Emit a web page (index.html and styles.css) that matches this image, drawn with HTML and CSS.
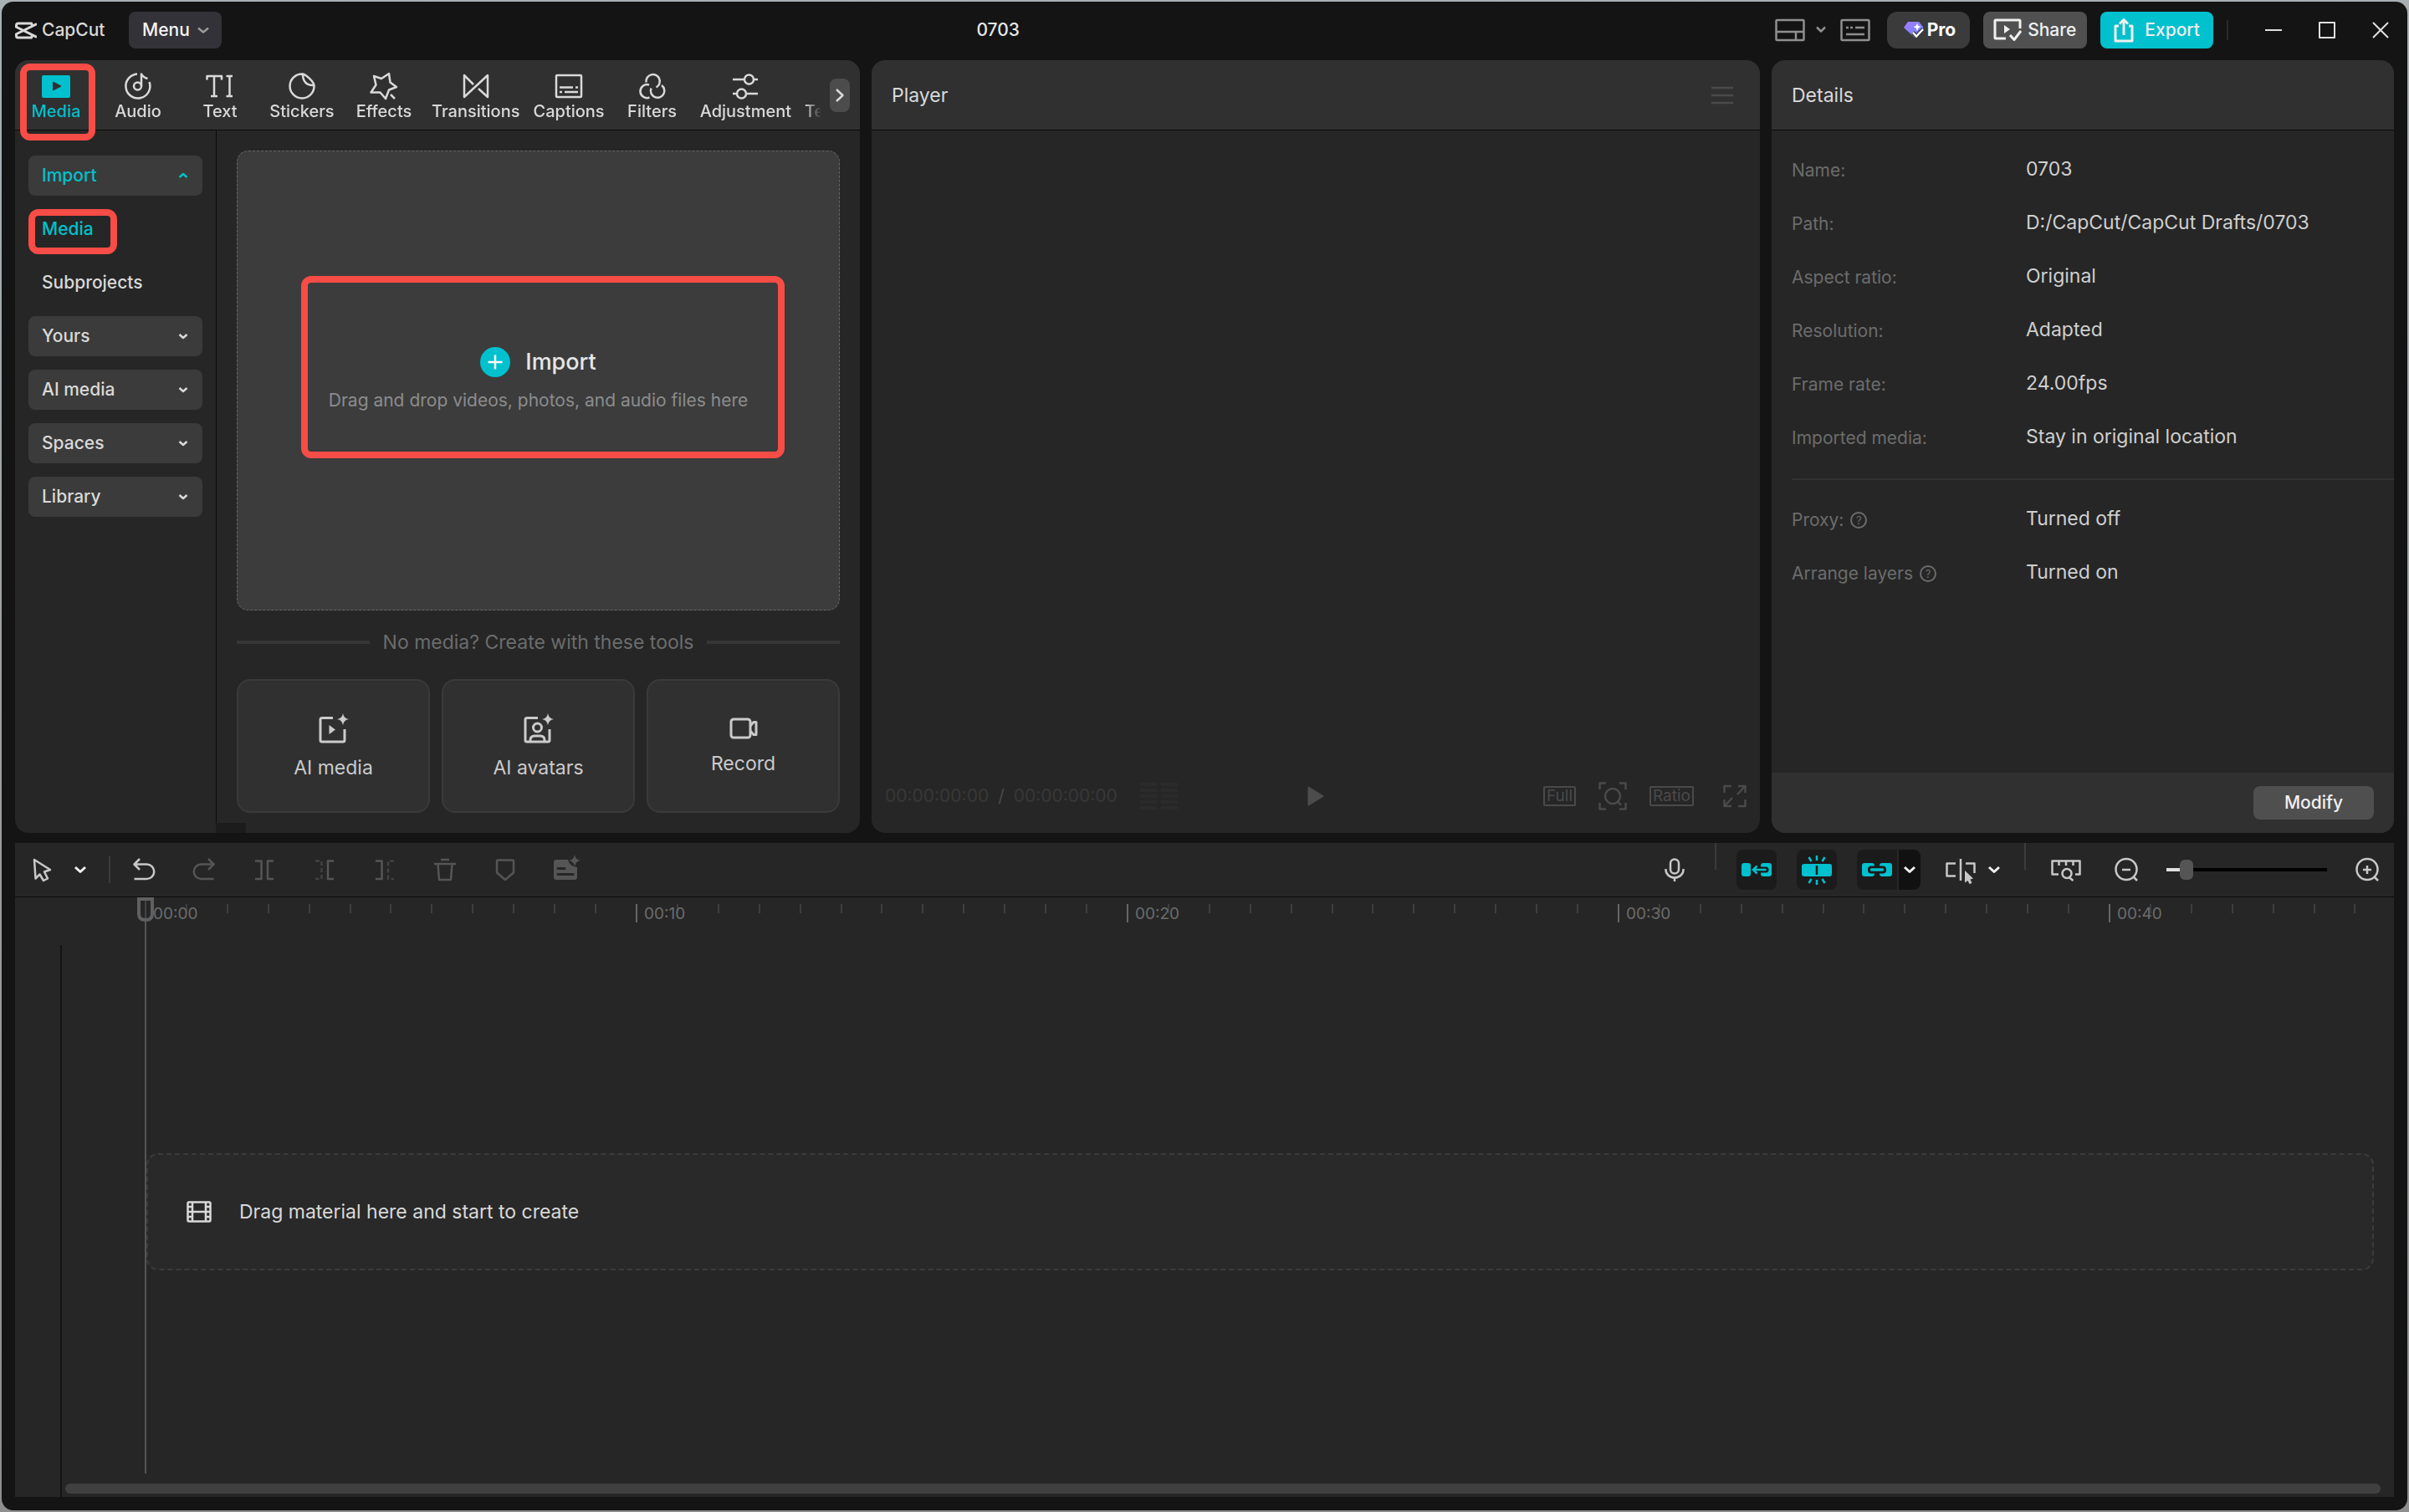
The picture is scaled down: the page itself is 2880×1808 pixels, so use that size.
FILE: index.html
```html
<!DOCTYPE html>
<html lang="en">

<head>
    <meta charset="utf-8" />
    <meta name="viewport" content="width=device-width, initial-scale=1">
    <title>CapCut - 0703</title>
    <link rel="stylesheet" href="styles.css">
</head>

<body>
    <div class="window">
        <header class="titlebar">
            <div class="brand">
                <svg class="logo" width="26" height="21" viewBox="0 0 26 21">
                    <path d="M1.500 7V4a2 2 0 0 1 2-2H19.500L21 5M1.500 14V17a2 2 0 0 0 2 2H19.500L21 16M1 6L26 18.500M1 15L26 2.500" />
                </svg>
                <span>CapCut</span>
            </div>
            <button class="menu-btn">Menu
                <svg class="icon" width="16" height="10" viewBox="0 0 16 10"><path d="M2 2.500L8 7.500L14 2.500" /></svg>
            </button>
            <h1>0703</h1>
            <div class="title-actions">
                <button class="plain layout-btn" aria-label="Layout">
                    <svg class="icon" width="36" height="28" viewBox="0 0 36 28"><rect x="1.500" y="2" width="33" height="24" rx="1" /><path d="M1 16H35M25 16V26" /></svg>
                    <svg class="icon" width="14" height="14" viewBox="0 0 14 14"><path d="M2 3.500L7 8.500L12 3.500" /></svg>
                </button>
                <button class="plain" aria-label="Shortcuts">
                    <svg class="icon" width="36" height="28" viewBox="0 0 36 28"><rect x="1.500" y="2" width="33" height="24" rx="1" /><path d="M7 11h3M12 11h3M18 11H29M7 19H29" /></svg>
                </button>
                <button class="btn pro">
                    <svg width="24" height="20" viewBox="0 0 24 20">
                        <defs><linearGradient id="gem" x1="0" y1="0" x2="1" y2="1"><stop offset="0" stop-color="#a57cff" /><stop offset="1" stop-color="#6a86ff" /></linearGradient></defs>
                        <path d="M5 0H18L23 6V9L13 19L0 7Z" fill="url(#gem)" />
                        <path d="M16 2l1.500 3 3 1-3 1.500L16 11l-1.500-3.500-3-1.500 3-1Z" fill="#fff" />
                        <path d="M11 13L15 17.500L23 9" fill="none" stroke="#3a3a3a" stroke-width="5" />
                        <path d="M11 13L15 17.500L23 9" fill="none" stroke="#fff" stroke-width="2.500" />
                    </svg>
                    Pro
                </button>
                <button class="btn share">
                    <svg class="icon" width="34" height="28" viewBox="0 0 34 28"><path d="M32 12V3a1 1 0 0 0-1-1H3a1 1 0 0 0-1 1V23a1 1 0 0 0 1 1H15M20 20L25 25.500L33 15" /><path class="fill" d="M13 8L20 13L13 18Z" /></svg>
                    Share
                </button>
                <button class="btn export">
                    <svg class="icon" width="24" height="30" viewBox="0 0 24 30"><path d="M6 10H2V28H22V10H18M12 21V2.500M7 7.500L12 2.500L17 7.500" /></svg>
                    Export
                </button>
                <span class="divider"></span>
                <button class="plain win" aria-label="Minimize"><svg class="icon" width="20" height="20" viewBox="0 0 20 20"><path d="M0 10H20" /></svg></button>
                <button class="plain win" aria-label="Maximize"><svg class="icon" width="20" height="20" viewBox="0 0 20 20"><rect x="1" y="1" width="18" height="18" /></svg></button>
                <button class="plain win" aria-label="Close"><svg class="icon" width="20" height="20" viewBox="0 0 20 20"><path d="M1 1L19 19M19 1L1 19" /></svg></button>
            </div>
        </header>

        <main class="workspace">
            <section class="panel library">
                <div class="panel-head tabs-head">
                    <nav class="tabs">
                        <button class="tab active">
                            <svg width="36" height="36" viewBox="0 0 36 36"><rect x="1" y="5" width="34" height="27" rx="2" fill="#00c1cd" /><path d="M14.500 13L24 18L14.500 23Z" fill="#303030" stroke="#303030" stroke-linejoin="round" /></svg>
                            Media
                        </button>
                        <button class="tab">
                            <svg class="icon" width="36" height="36" viewBox="0 0 36 36"><path d="M17 3.500A14.500 14.500 0 1 0 31.500 13M22 18V3.500Q24 7.500 29.500 9" /><circle cx="17.500" cy="18" r="4.500" /></svg>
                            Audio
                        </button>
                        <button class="tab">
                            <svg class="icon" width="36" height="36" viewBox="0 0 36 36"><path d="M2.500 10.500V6H20V10.500M11 6V30M7 30H15M25.500 6H33M29.500 6V30M25.500 30H33" /></svg>
                            Text
                        </button>
                        <button class="tab">
                            <svg class="icon" width="36" height="36" viewBox="0 0 36 36"><path d="M19 3.500A14.500 14.500 0 1 0 32.500 17C32 13 23 4 19 3.500C19 12 23 17.500 32.500 17" /></svg>
                            Stickers
                        </button>
                        <button class="tab">
                            <svg class="icon" width="36" height="36" viewBox="0 0 36 36"><path d="M6 6L15 9L24 3L25.500 13.500L33 19L24 22.500L20 33L13.500 25.500L2.500 25.500L8.500 16.500ZM26 28L31 33" /></svg>
                            Effects
                        </button>
                        <button class="tab">
                            <svg class="icon" width="36" height="36" viewBox="0 0 36 36"><path d="M15 16L4 5V31L32 5V31L21 21" /></svg>
                            Transitions
                        </button>
                        <button class="tab">
                            <svg class="icon" width="36" height="36" viewBox="0 0 36 36"><rect x="3" y="5" width="30" height="26" rx="1" /><path d="M7 19.500H23M26 19.500h3M7 25h3M13 25H29" /></svg>
                            Captions
                        </button>
                        <button class="tab">
                            <svg class="icon" width="36" height="36" viewBox="0 0 36 36"><path d="M10.500 13.500A8.200 8.200 0 1 1 22.500 19.500M14 16.500A8 8 0 1 0 14.500 31.500M16.500 20.500A8.200 8.200 0 1 0 29 17" /></svg>
                            Filters
                        </button>
                        <button class="tab">
                            <svg class="icon" width="36" height="36" viewBox="0 0 36 36"><path d="M3 10H17M28 10H33M3 27H8M19 27H33" /><circle cx="22.500" cy="10" r="5.500" /><circle cx="13.500" cy="27" r="5.500" /></svg>
                            Adjustment
                        </button>
                        <button class="tab">
                            <svg class="icon" width="36" height="36" viewBox="0 0 36 36"></svg>
                            Templates
                        </button>
                    </nav>
                    <button class="tabs-next" aria-label="More tabs">
                        <svg class="icon" width="12" height="18" viewBox="0 0 12 18"><path d="M2 2L9.500 9L2 16" /></svg>
                    </button>
                </div>
                <div class="library-body">
                    <nav class="side">
                        <button class="group active">Import <svg class="icon" width="14" height="10" viewBox="0 0 14 10"><path d="M2.500 7L7 3L11.500 7" /></svg></button>
                        <a class="side-link active" href="#media">Media</a>
                        <a class="side-link" href="#subprojects">Subprojects</a>
                        <button class="group">Yours <svg class="icon" width="14" height="10" viewBox="0 0 14 10"><path d="M2.500 3L7 7L11.500 3" /></svg></button>
                        <button class="group">AI media <svg class="icon" width="14" height="10" viewBox="0 0 14 10"><path d="M2.500 3L7 7L11.500 3" /></svg></button>
                        <button class="group">Spaces <svg class="icon" width="14" height="10" viewBox="0 0 14 10"><path d="M2.500 3L7 7L11.500 3" /></svg></button>
                        <button class="group">Library <svg class="icon" width="14" height="10" viewBox="0 0 14 10"><path d="M2.500 3L7 7L11.500 3" /></svg></button>
                    </nav>
                    <div class="media">
                        <div class="dropzone">
                            <button class="plain import-btn">
                                <svg width="36" height="36" viewBox="0 0 36 36"><circle cx="18" cy="18" r="18" fill="#00c1cd" /><path d="M9.500 18H26.500M18 9.500V26.500" stroke="#fff" stroke-width="2.500" /></svg>
                                Import
                            </button>
                            <p>Drag and drop videos, photos, and audio files here</p>
                            <span class="mark mark-drop"></span>
                        </div>
                        <p class="or">No media? Create with these tools</p>
                        <div class="cards">
                            <button class="card">
                                <svg class="icon" width="36" height="36" viewBox="0 0 36 36"><path d="M17 5.500H4a2 2 0 0 0-2 2V32a2 2 0 0 0 2 2H29a2 2 0 0 0 2-2V19" /><path class="fill" d="M12.500 14L20 19.500L12.500 25Z" /><path class="fill" d="M29 0Q30 6 36 7Q30 8 29 14Q28 8 22 7Q28 6 29 0Z" /></svg>
                                AI media
                            </button>
                            <button class="card">
                                <svg class="icon" width="36" height="36" viewBox="0 0 36 36"><path d="M17 5.500H4a2 2 0 0 0-2 2V32a2 2 0 0 0 2 2H29a2 2 0 0 0 2-2V19M8 33V32Q8 27 13 27H20Q25 27 25 32V33" /><circle cx="16.500" cy="17" r="5" /><path class="fill" d="M29 0Q30 6 36 7Q30 8 29 14Q28 8 22 7Q28 6 29 0Z" /></svg>
                                AI avatars
                            </button>
                            <button class="card">
                                <svg class="icon" width="34" height="26" viewBox="0 0 34 26"><rect x="2" y="2" width="23" height="22" rx="3" /><path d="M25 10L29 5.500H32V20.500H29L25 16" /></svg>
                                Record
                            </button>
                        </div>
                    </div>
                </div>
                <span class="mark mark-tab"></span>
                <span class="mark mark-link"></span>
            </section>

            <section class="panel player">
                <div class="panel-head">
                    <h2>Player</h2>
                    <button class="plain dim" aria-label="Player menu"><svg class="icon" width="26" height="22" viewBox="0 0 26 22"><path d="M0 2H26M0 11H26M0 20H26" /></svg></button>
                </div>
                <div class="screen"></div>
                <div class="player-bar">
                    <div class="timecode">
                        <span>00:00:00:00</span><span class="slash">/</span><span>00:00:00:00</span>
                        <svg width="45" height="34" viewBox="0 0 45 34"><path d="M0 3H20M25 3H45M0 10H20M25 10H45M0 17H20M25 17H45M0 24H20M25 24H45M0 31H20M25 31H45" stroke="#2b2b2b" stroke-width="4" /></svg>
                    </div>
                    <button class="plain" aria-label="Play"><svg width="20" height="24" viewBox="0 0 20 24"><path d="M1.500 1.500L18.500 12L1.500 22.500Z" fill="#4c4c4c" stroke="#4c4c4c" stroke-width="2" stroke-linejoin="round" /></svg></button>
                    <div class="view-tools">
                        <button class="boxed">Full</button>
                        <button class="plain" aria-label="Zoom to fit"><svg class="icon" width="34" height="34" viewBox="0 0 34 34"><path d="M1.500 9V1.500H9M25 1.500H32.500V9M1.500 25V32.500H9M25 32.500H32.500V25M22 23L27 27.500" /><circle cx="17" cy="17" r="9" /></svg></button>
                        <button class="boxed">Ratio</button>
                        <button class="plain" aria-label="Full screen"><svg class="icon" width="28" height="28" viewBox="0 0 28 28"><path d="M1.500 10V2H10M18 2H26.500V10M26 2.500L17 12M1.500 18V26H10M2 25.500L11 16M26.500 18V26H18" /></svg></button>
                    </div>
                </div>
            </section>

            <section class="panel details">
                <div class="panel-head">
                    <h2>Details</h2>
                </div>
                <dl class="props">
                    <div><dt>Name:</dt><dd>0703</dd></div>
                    <div><dt>Path:</dt><dd>D:/CapCut/CapCut Drafts/0703</dd></div>
                    <div><dt>Aspect ratio:</dt><dd>Original</dd></div>
                    <div><dt>Resolution:</dt><dd>Adapted</dd></div>
                    <div><dt>Frame rate:</dt><dd>24.00fps</dd></div>
                    <div><dt>Imported media:</dt><dd>Stay in original location</dd></div>
                </dl>
                <dl class="props more">
                    <div><dt>Proxy: <span class="help">?</span></dt><dd>Turned off</dd></div>
                    <div><dt>Arrange layers <span class="help">?</span></dt><dd>Turned on</dd></div>
                </dl>
                <div class="details-foot">
                    <button class="btn modify">Modify</button>
                </div>
            </section>
        </main>

        <section class="timeline">
            <div class="toolbar">
                <div class="tools">
                    <div class="split">
                        <button class="tool" aria-label="Select"><svg class="icon" width="48" height="48" viewBox="0 0 48 48"><path d="M15 12L34 24L27 26.500L31 34.500L26 37L21.500 29.500L16.500 34.500Z" /></svg></button>
                        <button class="tool narrow bright" aria-label="Select options"><svg class="icon" width="18" height="12" viewBox="0 0 18 12"><path d="M3 3L9 8.500L15 3" /></svg></button>
                    </div>
                    <span class="sep"></span>
                    <button class="tool" aria-label="Undo"><svg class="icon" width="48" height="48" viewBox="0 0 48 48"><path d="M19 11L12.500 17.500L19 24M13 17.500H27.500A8.500 8.500 0 0 1 27.500 35H12.500" /></svg></button>
                    <button class="tool off" aria-label="Redo"><svg class="icon" width="48" height="48" viewBox="0 0 48 48"><path d="M29 11L35.500 17.500L29 24M35 17.500H20.500A8.500 8.500 0 0 0 20.500 35H35.500" /></svg></button>
                    <button class="tool off" aria-label="Split"><svg class="icon" width="48" height="48" viewBox="0 0 48 48"><path d="M13 13.500H20.500V35H13M35 13.500H28V35H35" /></svg></button>
                    <button class="tool off" aria-label="Delete left"><svg class="icon" width="48" height="48" viewBox="0 0 48 48"><path d="M13 13.500H20.500V35H13" stroke-dasharray="5 3" opacity=".6" /><path d="M35 13.500H28V35H35" /></svg></button>
                    <button class="tool off" aria-label="Delete right"><svg class="icon" width="48" height="48" viewBox="0 0 48 48"><path d="M35 13.500H28V35H35" stroke-dasharray="5 3" opacity=".6" /><path d="M13 13.500H20.500V35H13" /></svg></button>
                    <button class="tool off" aria-label="Delete"><svg class="icon" width="48" height="48" viewBox="0 0 48 48"><path d="M11 17H37M19 12H29M15.500 17L17 36H31L32.500 17" /></svg></button>
                    <button class="tool off" aria-label="Marker"><svg class="icon" width="48" height="48" viewBox="0 0 48 48"><path d="M15.500 12.500H32.500a1.500 1.500 0 0 1 1.500 1.500V27.500L24 36L14 27.500V14a1.500 1.500 0 0 1 1.500-1.500Z" /></svg></button>
                    <button class="tool off" aria-label="Auto notes"><svg width="48" height="48" viewBox="0 0 48 48"><path d="M13 12H27Q29 20 38 21V33a3 3 0 0 1-3 3H13a3 3 0 0 1-3-3V15a3 3 0 0 1 3-3Z" fill="currentColor" /><path d="M15 22.500H23M15 29.500H33" stroke="#262626" stroke-width="3" stroke-linecap="round" /><path d="M35 6Q36 12 42 13Q36 14 35 20Q34 14 28 13Q34 12 35 6Z" fill="currentColor" /></svg></button>
                </div>
                <div class="tools">
                    <button class="tool" aria-label="Record voiceover"><svg class="icon" width="48" height="48" viewBox="0 0 48 48"><rect x="19" y="11.500" width="10" height="17" rx="5" /><path d="M13.500 23V24A10.500 9.500 0 0 0 34.500 24V23M24 33.500V38" /></svg></button>
                    <span class="sep high"></span>
                    <button class="tool on" aria-label="Main track magnet"><svg width="48" height="48" viewBox="0 0 48 48"><rect x="6" y="16" width="11" height="16" rx="3" fill="#00c1cd" /><rect x="29" y="16" width="13" height="16" rx="3" fill="#00c1cd" /><path d="M29 24H35" stroke="#1b1b1b" stroke-width="7" stroke-linecap="round" /><path d="M19 24H35.500M24.500 19.500L20 24L24.500 28.500" fill="none" stroke="#00c1cd" stroke-width="2.500" /></svg></button>
                    <button class="tool on" aria-label="Auto snapping"><svg width="48" height="48" viewBox="0 0 48 48"><rect x="6" y="17" width="36" height="15" rx="3" fill="#00c1cd" /><path d="M24 19V30" stroke="#1b1b1b" stroke-width="2.500" /><path d="M24 7V13M14.500 9L17.500 14M33.500 9L30.500 14M24 36V42M14.500 40L17.500 35M33.500 40L30.500 35" stroke="#00c1cd" stroke-width="2.500" /></svg></button>
                    <div class="split joined">
                        <button class="tool on" aria-label="Linkage"><svg width="48" height="48" viewBox="0 0 48 48"><rect x="6" y="16" width="15" height="16" rx="3" fill="#00c1cd" /><rect x="27" y="16" width="15" height="16" rx="3" fill="#00c1cd" /><rect x="13" y="19.500" width="22" height="9" rx="4" fill="#1b1b1b" /><path d="M17.500 24H30.500" stroke="#00c1cd" stroke-width="3.500" stroke-linecap="round" /></svg></button>
                        <button class="tool narrow bright" aria-label="Linkage options"><svg class="icon" width="18" height="12" viewBox="0 0 18 12"><path d="M3 3L9 8.500L15 3" /></svg></button>
                    </div>
                    <div class="split tight">
                        <button class="tool" aria-label="Preview axis"><svg class="icon" width="48" height="48" viewBox="0 0 48 48"><path d="M18 16.500H7.500V31.500H18M24 11V37M30 16.500H40.500V28" /><path class="fill" d="M29 25L39 34.500L35.500 35.500L37.500 40L34.500 41L32.500 37L29 39.500Z" /></svg></button>
                        <button class="tool narrow bright" aria-label="Preview axis options"><svg class="icon" width="18" height="12" viewBox="0 0 18 12"><path d="M3 3L9 8.500L15 3" /></svg></button>
                    </div>
                    <span class="sep high"></span>
                    <button class="tool" aria-label="Zoom to fit timeline"><svg class="icon" width="48" height="48" viewBox="0 0 48 48"><path d="M15 29.500H7.500V13.500H40.500V29.500H35M15.500 14V19M24 14V19M32.500 14V19M28 33.500L32.500 37" /><circle cx="25" cy="28.500" r="5.500" /></svg></button>
                    <button class="tool" aria-label="Zoom out"><svg class="icon" width="48" height="48" viewBox="0 0 48 48"><circle cx="24" cy="23.500" r="12.500" /><path d="M19 24H29M32.500 32.500L37 37" /></svg></button>
                    <input class="zoom" type="range" min="0" max="100" value="9" aria-label="Timeline zoom">
                    <button class="tool" aria-label="Zoom in"><svg class="icon" width="48" height="48" viewBox="0 0 48 48"><circle cx="24" cy="23.500" r="12.500" /><path d="M19 24H29M24 19V29M32.500 32.500L37 37" /></svg></button>
                </div>
            </div>
            <div class="timeline-body">
                <div class="ruler">
                    <span>00:00</span><span>00:10</span><span>00:20</span><span>00:30</span><span>00:40</span>
                </div>
                <div class="tracks">
                    <div class="track-heads"></div>
                    <div class="track-area">
                        <div class="track-list">
                            <div class="track-drop">
                                <svg class="icon" width="30" height="26" viewBox="0 0 30 26"><rect x="1.500" y="1.500" width="27" height="23" rx="1.500" /><path d="M7 2V24M23 2V24M7 13H23M2 7H7M2 13H7M2 19H7M23 7H28M23 13H28M23 19H28" /></svg>
                                Drag material here and start to create
                            </div>
                        </div>
                        <div class="scrollbar"></div>
                    </div>
                </div>
                <div class="playhead">
                    <svg width="20" height="29" viewBox="0 0 20 29"><path d="M2 2H18V20Q18 27 10 27Q2 27 2 20Z" fill="#262626" stroke="#606060" stroke-width="4" /><path d="M10 4V25" stroke="#606060" stroke-width="1" /></svg>
                </div>
            </div>
        </section>
    </div>
</body>

</html>
```
FILE: styles.css
```css
:root {
    --bg: #141414;
    --panel: #262626;
    --panel-head: #303030;
    --raised: #3b3b3b;
    --line: #0a0a0a;
    --text: #d9d9d9;
    --muted: #6c6c6c;
    --dim: #4a4a4a;
    --accent: #00c1cd;
    --mark: #f84c46;
}

* {
    box-sizing: border-box;
}

body {
    margin: 0;
    height: 100vh;
    padding: 2px;
    background: linear-gradient(#a9b0b4, #8e8e8e);
    color: var(--text);
    font-family: Inter, "Liberation Sans", sans-serif;
    font-size: 23px;
    line-height: 28px;
}

h1,
h2,
p,
dl,
dd {
    margin: 0;
    font-size: 23px;
    font-weight: 400;
}

button {
    border: 0;
    padding: 0;
    font: inherit;
    color: inherit;
    background: none;
    cursor: pointer;
}

svg {
    display: block;
    flex: none;
}

.icon {
    fill: none;
    stroke: currentColor;
    stroke-width: 2.5;
    stroke-linejoin: round;
}

.icon .fill {
    fill: currentColor;
    stroke: none;
}

.window {
    height: 100%;
    display: flex;
    flex-direction: column;
    padding: 0 16px 16px;
    border-radius: 14px;
    background: var(--bg);
}

/* title bar */
.titlebar {
    display: flex;
    align-items: center;
    height: 70px;
    padding-bottom: 2px;
    font-size: 21px;
    font-weight: 500;
}

.brand {
    display: flex;
    align-items: center;
    gap: 6px;
    width: 136px;
}

.logo {
    fill: none;
    stroke: #d9d9d9;
    stroke-width: 3;
}

.menu-btn {
    display: flex;
    align-items: center;
    gap: 8px;
    height: 44px;
    padding: 0 14px 0 16px;
    border-radius: 8px;
    background: #333238;
    color: #f5f5f5;
}

.menu-btn .icon {
    color: #9a9a9a;
}

.titlebar h1 {
    flex: 1;
    text-align: center;
    color: #e6e6e6;
    font-size: 21px;
    font-weight: 500;
}

.title-actions {
    display: flex;
    align-items: center;
    gap: 16px;
    color: #f0f0f0;
}

.title-actions > .plain {
    color: #8f8f8f;
}

.layout-btn {
    display: flex;
    align-items: center;
    gap: 12px;
}

.btn {
    display: flex;
    align-items: center;
    height: 44px;
    border-radius: 8px;
}

.pro {
    gap: 4px;
    margin-left: 4px;
    padding: 0 17px 0 20px;
    border-radius: 12px;
    background: var(--raised);
    color: #fff;
    font-weight: 700;
}

.share {
    gap: 7px;
    padding: 0 13px 0 12px;
    background: #505050;
}

.share .icon,
.export .icon {
    stroke-width: 3;
}

.export {
    gap: 13px;
    padding: 0 16px;
    background: var(--accent);
}

.divider {
    width: 2px;
    height: 24px;
    background: #2a2a2a;
}

.title-actions > .win {
    margin-left: 28px;
    color: #e0e0e0;
}

.win .icon {
    stroke-width: 2;
}

.title-actions > .win:last-child {
    margin-right: 6px;
}

/* panels */
.workspace {
    flex: 924 1 0;
    min-height: 0;
    display: grid;
    grid-template-columns: 1010fr 1062fr 744fr;
    gap: 14px;
}

.panel {
    position: relative;
    display: flex;
    flex-direction: column;
    min-width: 0;
    border-radius: 16px;
    background: var(--panel);
}

.panel-head {
    display: flex;
    align-items: center;
    justify-content: space-between;
    height: 84px;
    padding: 0 32px 0 24px;
    border-bottom: 1px solid var(--line);
    border-radius: 16px 16px 0 0;
    background: var(--panel-head);
}

.tabs-head {
    padding: 0 12px 0 0;
}

.tabs {
    display: flex;
    flex: 1;
    overflow: hidden;
    margin-right: 10px;
    padding-top: 2px;
    mask-image: linear-gradient(to left, transparent, #000 20px);
}

.tab {
    flex: none;
    display: flex;
    flex-direction: column;
    align-items: center;
    min-width: 98px;
    padding: 0 8px;
    font-size: 20px;
    font-weight: 500;
    line-height: 24px;
}

.tab.active,
.side .active {
    color: var(--accent);
}

.tabs-next {
    display: flex;
    align-items: center;
    justify-content: center;
    width: 24px;
    height: 40px;
    border-radius: 8px;
    background: #4c4c4c;
}

.library-body {
    flex: 1;
    display: flex;
    min-height: 0;
}

.side {
    position: relative;
    display: flex;
    flex-direction: column;
    gap: 16px;
    width: 241px;
    padding: 30px 16px;
    border-right: 1px solid var(--line);
    font-size: 21px;
    font-weight: 500;
}

/* corner of the collapsed scroll area */
.side::after {
    content: "";
    position: absolute;
    left: 100%;
    bottom: 0;
    width: 36px;
    height: 12px;
    background: #1c1c1c;
}

.group,
.side-link {
    display: flex;
    align-items: center;
    justify-content: space-between;
    height: 48px;
    padding: 0 16px;
    border-radius: 8px;
    color: var(--text);
    text-decoration: none;
}

.group {
    background: var(--raised);
}

.media {
    flex: 1;
    display: flex;
    flex-direction: column;
    padding: 24px;
}

.dropzone {
    position: relative;
    flex: 1;
    display: flex;
    flex-direction: column;
    align-items: center;
    justify-content: center;
    gap: 14px;
    padding-bottom: 2px;
    border: 1px dashed #666;
    border-radius: 14px;
    background: #3c3c3c;
}

.import-btn {
    display: flex;
    align-items: center;
    gap: 18px;
    color: #e6e6e6;
    font-size: 27px;
    font-weight: 500;
    line-height: 36px;
}

.dropzone p {
    color: #8c8c8c;
    font-size: 21px;
}

.or {
    display: flex;
    align-items: center;
    gap: 16px;
    padding: 24px 0 30px;
    color: var(--muted);
}

.or::before,
.or::after {
    content: "";
    flex: 1;
    height: 4px;
    background: #363636;
}

.cards {
    display: grid;
    grid-template-columns: repeat(3, 1fr);
    gap: 14px;
}

.card {
    display: flex;
    flex-direction: column;
    align-items: center;
    justify-content: center;
    gap: 15px;
    height: 160px;
    border: 2px solid #3a3a3e;
    border-radius: 16px;
    background: var(--panel-head);
    color: #cbcbcb;
}

.card .icon {
    stroke-width: 3;
}

/* callout frames */
.mark {
    position: absolute;
    border: 8px solid var(--mark);
    border-radius: 12px;
    pointer-events: none;
}

.mark-tab {
    left: 6px;
    top: 4px;
    width: 90px;
    height: 92px;
}

.mark-link {
    left: 16px;
    top: 178px;
    width: 106px;
    height: 54px;
}

.mark-drop {
    left: 76px;
    top: 149px;
    width: 578px;
    height: 218px;
}

/* player */
.dim {
    color: var(--dim);
}

.screen {
    flex: 1;
}

.player-bar {
    display: grid;
    grid-template-columns: 1fr auto 1fr;
    align-items: center;
    height: 88px;
    padding: 0 16px;
    color: var(--dim);
}

.timecode {
    display: flex;
    align-items: center;
    gap: 11px;
    color: #383838;
    font-size: 21px;
}

.timecode svg {
    margin-left: 16px;
}

.slash {
    color: var(--dim);
}

.view-tools {
    display: flex;
    align-items: center;
    justify-content: flex-end;
    gap: 27px;
}

.boxed {
    padding: 0 2px;
    border: 2px solid var(--dim);
    border-radius: 2px;
    font-size: 19px;
    line-height: 20px;
}

.view-tools > :last-child {
    margin-left: 8px;
}

/* details */
.props {
    padding: 15px 0 17px;
    margin-left: 24px;
}

.props div {
    display: flex;
    align-items: center;
    height: 64px;
}

.props.more {
    border-top: 2px solid #333;
}

.props dt {
    display: flex;
    align-items: center;
    gap: 8px;
    width: 280px;
    padding-top: 2px;
    color: var(--muted);
    font-size: 21px;
}

.props dd {
    padding-bottom: 2px;
    color: #cfcfcf;
}

.help {
    width: 20px;
    height: 20px;
    border: 2px solid;
    border-radius: 50%;
    font-size: 13px;
    line-height: 16px;
    text-align: center;
}

.details-foot {
    display: flex;
    justify-content: flex-end;
    margin-top: auto;
    padding: 16px 24px;
    border-radius: 0 0 16px 16px;
    background: var(--panel-head);
}

.modify {
    justify-content: center;
    width: 144px;
    height: 40px;
    background: #4f4f4f;
    color: #f0f0f0;
    font-size: 21px;
    font-weight: 500;
}

/* timeline */
.timeline {
    flex: 782 1 0;
    min-height: 0;
    display: flex;
    flex-direction: column;
    margin-top: 12px;
    background: var(--panel);
}

.toolbar {
    display: flex;
    justify-content: space-between;
    height: 65px;
    padding: 0 8px;
    border-bottom: 1px solid var(--line);
}

.tools {
    display: flex;
    align-items: center;
    gap: 24px;
    color: #c8c8c8;
}

.tool {
    display: flex;
    align-items: center;
    justify-content: center;
    width: 48px;
    height: 48px;
    border-radius: 8px;
}

.tool.off {
    color: #555;
}

.tool.on {
    background: #1b1b1b;
}

.tool.narrow {
    width: 28px;
}

.bright {
    color: #f0f0f0;
}

.bright .icon {
    stroke-width: 3;
}

.split {
    display: flex;
    gap: 8px;
}

.split.tight,
.split.joined {
    gap: 2px;
}

.tight {
    margin-right: -2px;
}

.joined .on {
    border-radius: 8px 0 0 8px;
}

.joined .narrow {
    width: 26px;
    border-radius: 0 8px 8px 0;
    background: #111;
}

.sep {
    width: 2px;
    height: 32px;
    margin: 0 -8px 0 -4px;
    background: #3c3c3c;
}

.sep.high {
    align-self: flex-start;
    margin: 0;
}

.zoom {
    appearance: none;
    width: 192px;
    height: 24px;
    margin: 0;
    background: linear-gradient(to right, #e0e0e0 9%, #000 9%) center / 100% 4px no-repeat;
}

.zoom::-webkit-slider-thumb {
    appearance: none;
    width: 16px;
    height: 24px;
    border-radius: 6px;
    background: #555;
}

.timeline-body {
    position: relative;
    flex: 1;
    display: flex;
    flex-direction: column;
    min-height: 0;
}

.ruler {
    display: flex;
    height: 57px;
    margin-left: 155px;
    padding-top: 8px;
    overflow: hidden;
    color: #6c6c6c;
    font-size: 19px;
    line-height: 24px;
}

/* ten seconds, twelve ticks */
.ruler span {
    flex: none;
    width: 587px;
    height: 24px;
    padding-left: 10px;
    background:
        linear-gradient(#666, #666) 0 0 / 2px 22px no-repeat,
        repeating-linear-gradient(to right, #3e3e3e 0 2px, transparent 2px calc(100% / 12)) 0 0 / 100% 11px no-repeat;
}

.tracks {
    flex: 1;
    display: flex;
    min-height: 0;
}

.track-heads {
    width: 56px;
    border-right: 2px solid var(--bg);
}

.track-area {
    flex: 1;
    display: flex;
    flex-direction: column;
    padding: 0 16px 4px 4px;
}

.track-list {
    flex: 1;
    display: flex;
    align-items: center;
    padding: 0 8px 0 97px;
}

.track-drop {
    flex: 1;
    display: flex;
    align-items: center;
    gap: 33px;
    height: 140px;
    padding: 0 46px;
    border: 2px dashed #3c3c3c;
    border-radius: 14px;
    background: #292929;
}

.scrollbar {
    height: 12px;
    margin-top: 6px;
    border-radius: 6px;
    background: #404040;
}

.playhead {
    position: absolute;
    left: 146px;
    top: 0;
    bottom: 28px;
    width: 20px;
    background: linear-gradient(#555, #555) center / 2px 100% no-repeat;
}
```
